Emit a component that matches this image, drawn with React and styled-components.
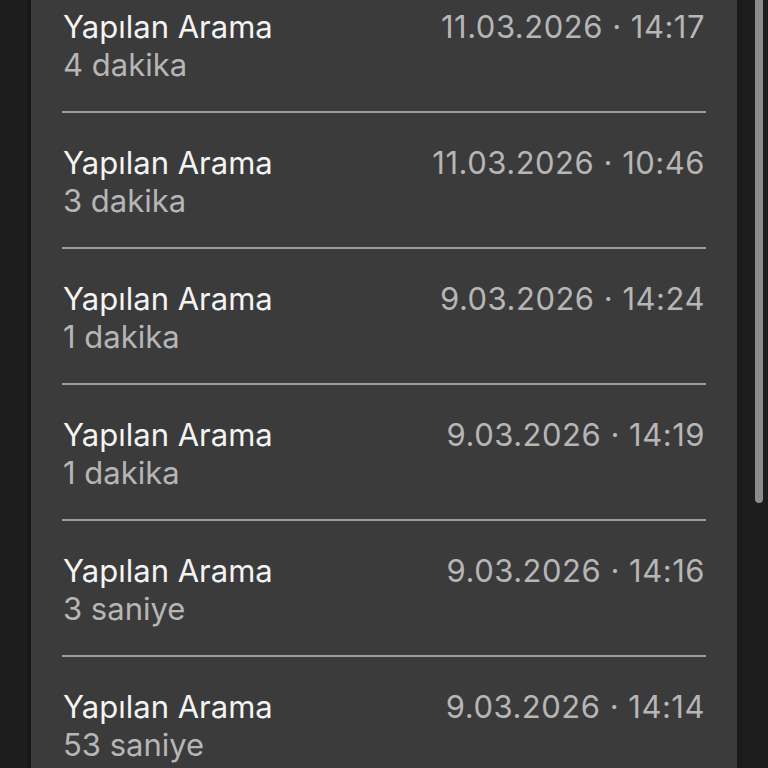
import styled, { createGlobalStyle } from "styled-components";

const GlobalStyle = createGlobalStyle`
  html, body {
    margin: 0;
    padding: 0;
    background: #1d1d1d;
    overflow: hidden;
  }
  body {
    font-family: Inter, "Noto Sans", "Liberation Sans", sans-serif;
    -webkit-font-smoothing: antialiased;
  }
`;

const Screen = styled.div`
  position: relative;
  display: flex;
  width: 768px;
  height: 768px;
  overflow: hidden;
  background: #1d1d1d;
`;

const Gutter = styled.div`
  width: 27px;
  flex-shrink: 0;
  border-right: 4px solid #171717;
`;

const Card = styled.div`
  width: 706px;
  flex-shrink: 0;
  margin-top: -23px;
  background: #3b3b3b;
  align-self: flex-start;
`;

const RightGutter = styled.div`
  flex: 1;
  border-left: 5px solid #191919;
`;

const Scrollbar = styled.div`
  position: absolute;
  top: 0;
  right: 5px;
  width: 8px;
  height: 503px;
  border-radius: 0 0 4px 4px;
  background: #8b8b8b;
`;

const CallList = styled.div`
  display: flex;
  flex-direction: column;
  padding: 0 31px;
`;

const CallRow = styled.div`
  display: flex;
  justify-content: space-between;
  align-items: flex-start;
  padding: 31px 1px 27px 1px;
  border-bottom: ${(p) => (p.$last ? "none" : "2px solid #9d9d9d")};
`;

const Info = styled.div`
  display: flex;
  flex-direction: column;
`;

const Title = styled.div`
  font-size: 31px;
  line-height: 38px;
  color: #f4f4f4;
`;

const Duration = styled.div`
  font-size: 31px;
  line-height: 38px;
  color: #b6b6b6;
`;

const Stamp = styled.div`
  font-size: 31px;
  line-height: 38px;
  letter-spacing: 0.5px;
  color: #b6b6b6;
  white-space: nowrap;
`;

const calls = [
  { id: 1, duration: "4 dakika", date: "11.03.2026", time: "14:17" },
  { id: 2, duration: "3 dakika", date: "11.03.2026", time: "10:46" },
  { id: 3, duration: "1 dakika", date: "9.03.2026", time: "14:24" },
  { id: 4, duration: "1 dakika", date: "9.03.2026", time: "14:19" },
  { id: 5, duration: "3 saniye", date: "9.03.2026", time: "14:16" },
  { id: 6, duration: "53 saniye", date: "9.03.2026", time: "14:14" },
];

const App = () => {
  return (
    <>
      <GlobalStyle />
      <Screen>
        <Gutter />
        <Card>
          <CallList>
            {calls.map((call, i) => (
              <CallRow key={call.id} $last={i === calls.length - 1}>
                <Info>
                  <Title>Yapılan Arama</Title>
                  <Duration>{call.duration}</Duration>
                </Info>
                <Stamp>
                  {call.date} · {call.time}
                </Stamp>
              </CallRow>
            ))}
          </CallList>
        </Card>
        <RightGutter />
        <Scrollbar />
      </Screen>
    </>
  );
};

export default App;
